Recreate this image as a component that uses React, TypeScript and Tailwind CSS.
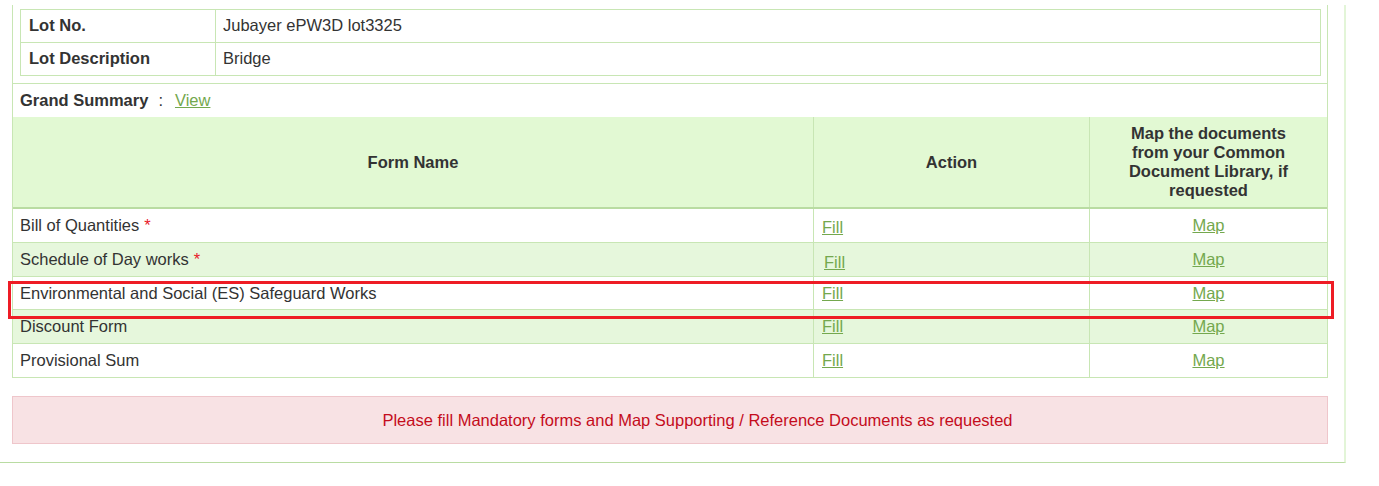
import React from "react";

const rows = [
  { name: "Bill of Quantities", req: true, bg: "bg-white", h: "h-[33px]", fill: "pt-[4px] pl-[8px]" },
  { name: "Schedule of Day works", req: true, bg: "bg-[#e6f7dc]", h: "h-[33px]", fill: "pt-[5px] pl-[10px]" },
  { name: "Environmental and Social (ES) Safeguard Works", req: false, bg: "bg-white", h: "h-[32px]", fill: "pl-[8px]" },
  { name: "Discount Form", req: false, bg: "bg-[#e6f7dc]", h: "h-[33px]", fill: "pl-[8px]" },
  { name: "Provisional Sum", req: false, bg: "bg-white", h: "h-[33px]", fill: "pl-[8px]" },
];

export default function App() {
  return (
    <div
      className="w-[1379px] h-[486px] bg-white text-[16.5px] text-[#333] pt-[5px] relative"
      style={{ fontFamily: '"Liberation Sans", Arial, sans-serif' }}
    >
      <div className="w-[1346px] border-r-2 border-r-[#e3f5d8] border-b border-b-[#b9dca2] pb-[18px]">
        <div className="ml-[12px] w-[1316px]">
          {/* Lot box */}
          <div className="border-x border-b border-[#c8e6b4] pt-[4px] pb-[7px] pl-[7px] pr-[6px]">
            <div className="border border-[#c8e6b4]">
              <div className="flex h-[33px] border-b border-[#c8e6b4]">
                <div className="w-[195px] border-r border-[#c8e6b4] pl-[8px] pb-[2px] flex items-center font-bold">Lot No.</div>
                <div className="flex-1 pl-[7px] pb-[2px] flex items-center">Jubayer ePW3D lot3325</div>
              </div>
              <div className="flex h-[32px]">
                <div className="w-[195px] border-r border-[#c8e6b4] pl-[8px] pb-[2px] flex items-center font-bold">Lot Description</div>
                <div className="flex-1 pl-[7px] pb-[2px] flex items-center">Bridge</div>
              </div>
            </div>
          </div>
          {/* Grand summary */}
          <div className="border-x border-[#c8e6b4] h-[33px] flex items-center pl-[7px]">
            <span className="font-bold">Grand Summary</span>
            <span className="ml-[10px] mr-[12px]">:</span>
            <a href="#" className="text-[#74a84e] underline">View</a>
          </div>
          {/* Forms table */}
          <div className="border-l border-r border-[#c8e6b4]">
            <div className="grid grid-cols-[801px_276px_237px] bg-[#e2f9d3] h-[92px] border-b-2 border-[#b9dca2] font-bold text-[#333]">
              <div className="flex items-center justify-center border-r border-[#c8e6b4] pt-[1px]">Form Name</div>
              <div className="flex items-center justify-center border-r border-[#c8e6b4] pt-[1px]">Action</div>
              <div className="flex items-center justify-center text-center leading-[19px] px-[28px]">
                Map the documents from your Common Document Library, if requested
              </div>
            </div>
            {rows.map((r) => (
              <div
                key={r.name}
                className={`grid grid-cols-[801px_276px_237px] ${r.bg} ${r.h} border-b border-[#c8e6b4] box-content`}
              >
                <div className="flex items-center pl-[7px] border-r border-[#c8e6b4]">
                  {r.name}
                  {r.req && <span className="text-[#e8202a] ml-[5px]">*</span>}
                </div>
                <div className={`flex items-center border-r border-[#c8e6b4] ${r.fill}`}>
                  <a href="#" className="text-[#74a84e] underline">Fill</a>
                </div>
                <div className="flex items-center justify-center">
                  <a href="#" className="text-[#74a84e] underline">Map</a>
                </div>
              </div>
            ))}
          </div>
          {/* Alert */}
          <div className="mt-[18px] h-[48px] bg-[#f8e2e4] border border-[#efc6cb] flex items-center justify-center pl-[55px] text-[#c40c1c]">
            Please fill Mandatory forms and Map Supporting / Reference Documents as requested
          </div>
        </div>
      </div>
      {/* Red highlight box */}
      <div className="absolute left-[8px] top-[281px] w-[1326px] h-[38px] border-[3px] border-[#ee1c25] pointer-events-none" />
    </div>
  );
}
